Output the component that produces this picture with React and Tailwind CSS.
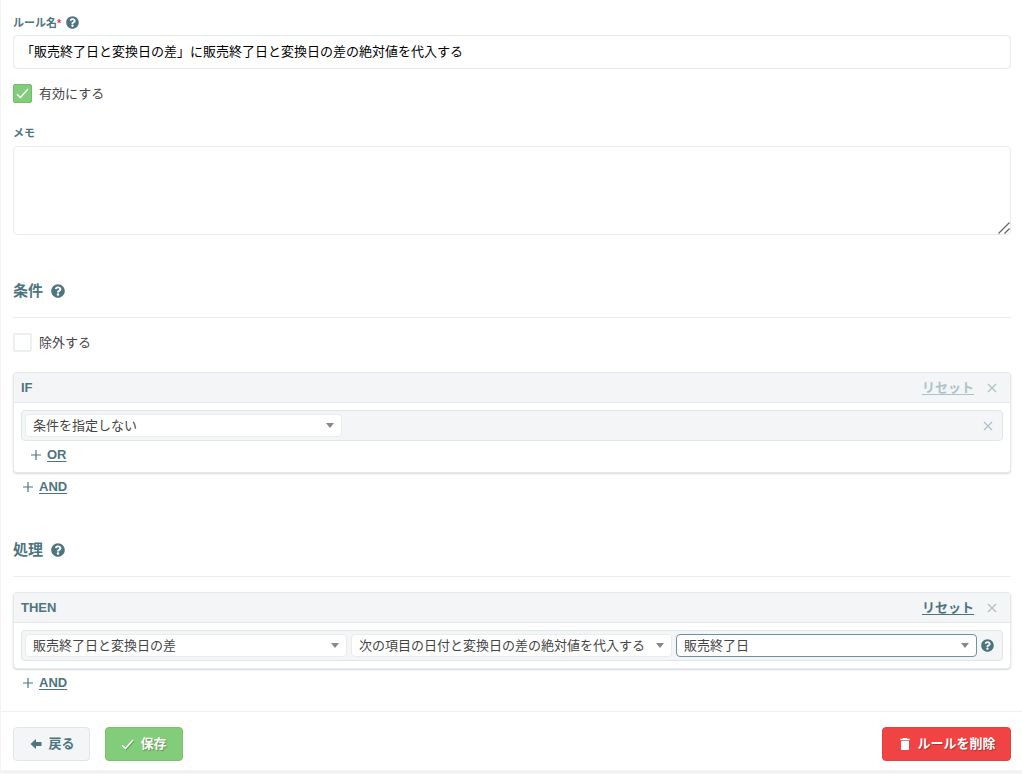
import { useState } from "react";
import { FaQuestionCircle } from "react-icons/fa";
import { MdDelete } from "react-icons/md";

const initRule = {
  name: "「販売終了日と変換日の差」に販売終了日と変換日の差の絶対値を代入する",
  enabled: true,
  memo: "",
  exclude: false,
};

const HelpButton = ({ large }) => {
  return (
    <button type="button" aria-label="ヘルプ" className="text-[#4d7580]">
      <FaQuestionCircle className={large ? "size-[14px]" : "size-[13px]"} />
    </button>
  );
};

const CloseButton = ({ label }) => {
  return (
    <button type="button" aria-label={label} className="p-px text-[#afc2c7]">
      <svg viewBox="0 0 10 10" className="size-[10px]" fill="none" stroke="currentColor" strokeWidth="1.3">
        <path d="M1 1l8 8M9 1l-8 8" />
      </svg>
    </button>
  );
};

const CheckMark = ({ className }) => {
  return (
    <svg viewBox="0 0 14 12" className={className} fill="none" stroke="currentColor" strokeWidth="1.6">
      <path d="M1 6.8l3.8 3.6L13 1.2" />
    </svg>
  );
};

const CheckField = ({ id, label, checked, onChange }) => {
  return (
    <div className="flex h-[19px] items-center gap-[7px]">
      <span className="relative flex">
        <input
          id={id}
          name={id}
          type="checkbox"
          checked={checked}
          onChange={onChange}
          className="size-[19px] appearance-none rounded-[2px] border-2 border-[#eceff0] bg-white checked:border checked:border-[#74bb6c] checked:bg-[#82cd79]"
        />
        {checked ? (
          <CheckMark className="pointer-events-none absolute top-1 left-[3px] h-[11px] w-[13px] text-white" />
        ) : (
          <></>
        )}
      </span>
      <label htmlFor={id} className="text-[13px] leading-5 text-[#444]">
        {label}
      </label>
    </div>
  );
};

const SelectBox = ({ label, options, active, className }) => {
  return (
    <div className={"relative " + className}>
      <select
        aria-label={label}
        className={
          active
            ? "block h-[23px] w-full appearance-none rounded-[4px] border border-[#6f929b] bg-white pr-6 pl-[7px] text-[13px] leading-5 text-[#444]"
            : "block h-[23px] w-full appearance-none rounded-[4px] border border-[#e8eced] bg-white pr-6 pl-[7px] text-[13px] leading-5 text-[#444]"
        }
      >
        {options.map((option) => (
          <option key={option}>{option}</option>
        ))}
      </select>
      <svg
        viewBox="0 0 8 5"
        className="pointer-events-none absolute top-[9px] right-[8px] h-[5px] w-[8px] fill-[#888]"
      >
        <path d="M0 0h8L4 5z" />
      </svg>
    </div>
  );
};

const SectionTitle = ({ title }) => {
  return (
    <div className="flex items-center gap-2 border-b border-[#e9eeef] pb-4">
      <h2 className="text-[15px] leading-5 font-bold">{title}</h2>
      <HelpButton large />
    </div>
  );
};

const AddLink = ({ text }) => {
  return (
    <a href="#" className="flex w-fit items-center gap-[6px] text-[13px] leading-4 font-bold">
      <svg viewBox="0 0 10 10" className="size-[10px]" stroke="currentColor" strokeWidth="1.2">
        <path d="M5 0v10M0 5h10" />
      </svg>
      <span className="underline underline-offset-2">{text}</span>
    </a>
  );
};

const RuleCard = ({ title, resettable, children }) => {
  return (
    <section className="rounded-[4px] border border-[#e3e8ea] bg-white shadow-[0_1px_2px_rgba(0,0,0,0.15)]">
      <header className="flex h-[30px] items-center justify-between rounded-t-[3px] border-b border-[#e3e8ea] bg-[#f3f5f7] pr-3 pl-[7px]">
        <h3 className="text-[13px] leading-5 font-bold">{title}</h3>
        <div className="flex items-center gap-3">
          <button
            type="button"
            disabled={!resettable}
            className="text-[13px] leading-5 font-bold underline underline-offset-2 disabled:text-[#afc2c7]"
          >
            リセット
          </button>
          <CloseButton label={title + "を削除"} />
        </div>
      </header>
      <div className="p-[7px]">{children}</div>
    </section>
  );
};

const RuleRow = ({ children }) => {
  return (
    <div className="flex items-center gap-1 rounded-[4px] border border-[#e0e6e8] bg-[#f3f5f7] p-[3px] pr-2">
      {children}
    </div>
  );
};

const App = () => {
  const [rule, setRule] = useState({ ...initRule });

  const handleChange = (e) => {
    setRule({ ...rule, [e.target.name]: e.target.value });
  };

  const handleCheck = (e) => {
    setRule({ ...rule, [e.target.name]: e.target.checked });
  };

  return (
    <div className="bg-[#f3f3f3] pb-1 font-['Liberation_Sans','Noto_Sans_CJK_JP',sans-serif] text-[#4d7580]">
      <form className="border-l border-[#f3f3f3] bg-white" onSubmit={(e) => e.preventDefault()}>
        <div className="px-3 pt-[15px] pr-[11px]">
          <div className="flex h-[15px] items-center gap-[5px]">
            <label htmlFor="name" className="text-[11px] leading-[14px] font-bold">
              ルール名<span className="text-[#f04444]">*</span>
            </label>
            <HelpButton />
          </div>
          <input
            id="name"
            name="name"
            type="text"
            value={rule.name}
            onChange={handleChange}
            className="mt-[5px] block h-[34px] w-full rounded-[4px] border border-[#e3ebec] px-[7px] pb-[3px] text-[13px] text-black"
          />
          <div className="mt-[15px]">
            <CheckField id="enabled" label="有効にする" checked={rule.enabled} onChange={handleCheck} />
          </div>
          <label htmlFor="memo" className="mt-[23px] block text-[11px] leading-[14px] font-bold">
            メモ
          </label>
          <div className="relative mt-[6px]">
            <textarea
              id="memo"
              name="memo"
              value={rule.memo}
              onChange={handleChange}
              className="block h-[89px] w-full resize-none rounded-[4px] border border-[#e3ebec] p-2 text-[13px] text-black"
            />
            <svg
              viewBox="0 0 12 12"
              className="pointer-events-none absolute right-[1px] bottom-[1px] size-3"
              stroke="#666"
              strokeWidth="1.3"
            >
              <path d="M0.5 11.5l11-11M6.5 11.5l5-5" />
            </svg>
          </div>

          <div className="mt-[46px]">
            <SectionTitle title="条件" />
          </div>
          <div className="mt-[15px]">
            <CheckField id="exclude" label="除外する" checked={rule.exclude} onChange={handleCheck} />
          </div>
          <div className="mt-5">
            <RuleCard title="IF">
              <RuleRow>
                <SelectBox label="条件" options={["条件を指定しない"]} className="w-[317px]" />
                <div className="ml-auto flex">
                  <CloseButton label="条件を削除" />
                </div>
              </RuleRow>
              <div className="mt-[6px] mb-[2px] ml-[10px]">
                <AddLink text="OR" />
              </div>
            </RuleCard>
          </div>
          <div className="mt-[6px] ml-[10px]">
            <AddLink text="AND" />
          </div>

          <div className="mt-[45px]">
            <SectionTitle title="処理" />
          </div>
          <div className="mt-[15px]">
            <RuleCard title="THEN" resettable>
              <RuleRow>
                <SelectBox label="項目" options={["販売終了日と変換日の差"]} className="w-[322px]" />
                <SelectBox
                  label="処理内容"
                  options={["次の項目の日付と変換日の差の絶対値を代入する"]}
                  className="w-[321px]"
                />
                <SelectBox label="対象項目" options={["販売終了日"]} active className="flex-1" />
                <HelpButton />
              </RuleRow>
            </RuleCard>
          </div>
          <div className="mt-[6px] ml-[10px]">
            <AddLink text="AND" />
          </div>
        </div>

        <footer className="mt-5 flex items-center gap-[15px] border-t border-[#f0f2f2] pt-[15px] pr-[11px] pb-[9px] pl-3 text-[13px] leading-5 font-bold">
          <button
            type="button"
            className="flex h-[34px] w-[77px] items-center justify-center gap-[6px] rounded-[4px] border border-[#dfe5e8] bg-[#f3f5f7] pl-[2px]"
          >
            <svg viewBox="0 0 12 12" className="size-3 fill-current">
              <path d="M0.5 6L6 1v3h5.5v4H6v3z" />
            </svg>
            戻る
          </button>
          <button
            type="submit"
            className="flex h-[34px] w-[78px] items-center justify-center gap-[6px] rounded-[4px] border border-[#78c070] bg-[#82cd79] text-white text-shadow-[1px_1px_1px_rgba(0,0,0,0.3)]"
          >
            <CheckMark className="h-[11px] w-[13px] drop-shadow-[1px_1px_0_rgba(0,0,0,0.2)]" />
            保存
          </button>
          <button
            type="button"
            className="ml-auto flex h-[34px] w-[129px] items-center justify-center gap-1 rounded-[4px] border border-[#e64141] bg-[#f04444] text-white text-shadow-[1px_1px_1px_rgba(0,0,0,0.3)]"
          >
            <MdDelete className="size-4" />
            ルールを削除
          </button>
        </footer>
      </form>
    </div>
  );
};

export default App;
